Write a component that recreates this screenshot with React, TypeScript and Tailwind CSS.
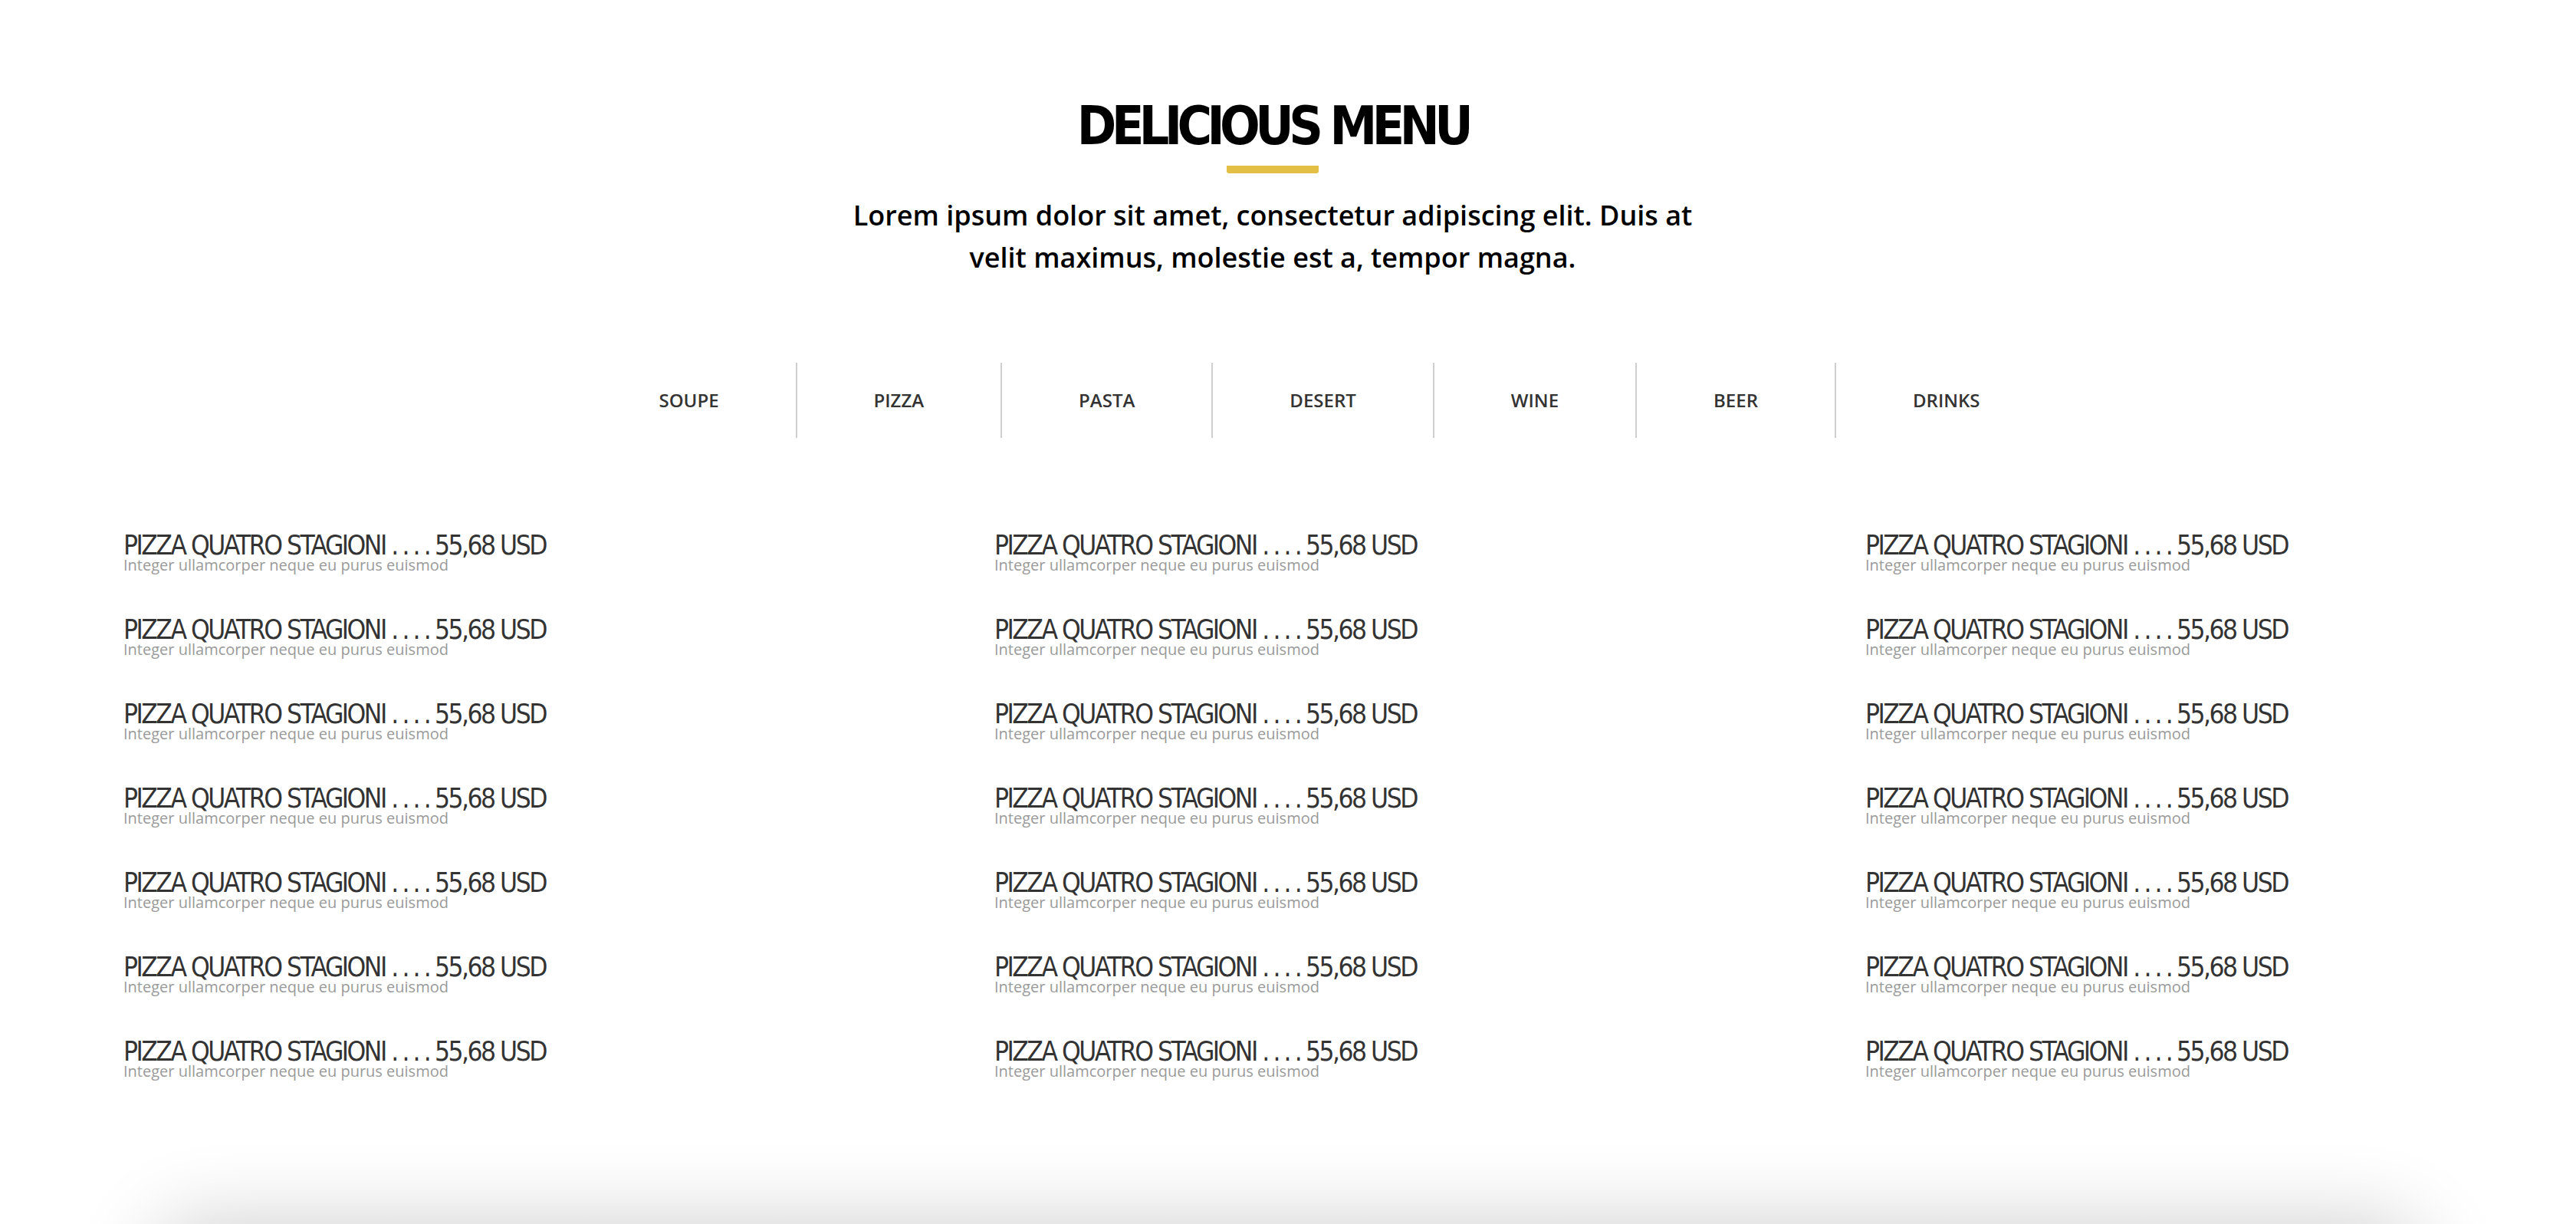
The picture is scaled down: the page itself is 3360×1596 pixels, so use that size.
import React from 'react';

const tabs = ['SOUPE', 'PIZZA', 'PASTA', 'DESERT', 'WINE', 'BEER', 'DRINKS'];

const dosis = { fontFamily: '"Liberation Sans Narrow", "DejaVu Sans Condensed", "Liberation Sans", sans-serif' };
const openSans = { fontFamily: '"Open Sans", "Noto Sans", sans-serif' };

const MenuItem = () => (
  <div className="flex flex-col">
    <div className="text-[35px] leading-[34px] tracking-[-2.5px] text-[#333] whitespace-nowrap" style={dosis}>
      PIZZA QUATRO STAGIONI <span className="tracking-[0.12em]">....</span>55,68 USD
    </div>
    <div className="text-[20px] leading-[18px] text-[#9a9a9a] whitespace-nowrap" style={openSans}>
      Integer ullamcorper neque eu purus euismod
    </div>
  </div>
);

export default function App() {
  const items = Array.from({ length: 21 });
  return (
    <div className="h-[1596px] overflow-hidden bg-white flex flex-col">
      <div className="flex flex-col items-center pt-[126px] pr-[40px]">
        <h1 className="text-[69px] leading-[76px] font-bold tracking-[-6.5px] text-black" style={dosis}>
          DELICIOUS MENU
        </h1>
        <div className="mt-[14px] h-[10px] w-[120px] rounded-b-[3px] bg-[#e3c045]" />
        <p className="mt-[27px] max-w-[1170px] text-center text-[36px] leading-[55px] font-semibold text-black" style={openSans}>
          Lorem ipsum dolor sit amet, consectetur adipiscing elit. Duis at velit maximus, molestie est a, tempor magna.
        </p>
      </div>

      <ul className="mt-[110px] flex justify-center pl-[82px]" style={openSans}>
        {tabs.map((t, i) => (
          <li
            key={t}
            className={`flex h-[98px] items-center px-[100px] text-[24px] font-semibold text-[#333] ${i > 0 ? 'border-l-2 border-[#cfcfcf]' : ''}`}
          >
            {t}
          </li>
        ))}
      </ul>

      <div className="mt-[123px] grid grid-cols-3 gap-x-[370px] gap-y-[58px] px-[161px]">
        {items.map((_, i) => (
          <MenuItem key={i} />
        ))}
      </div>

      <div className="mt-auto h-0 px-[200px]">
        <div className="h-[400px] rounded-[60px] bg-white shadow-[0_0_110px_rgba(0,0,0,0.2)]" />
      </div>
    </div>
  );
}
